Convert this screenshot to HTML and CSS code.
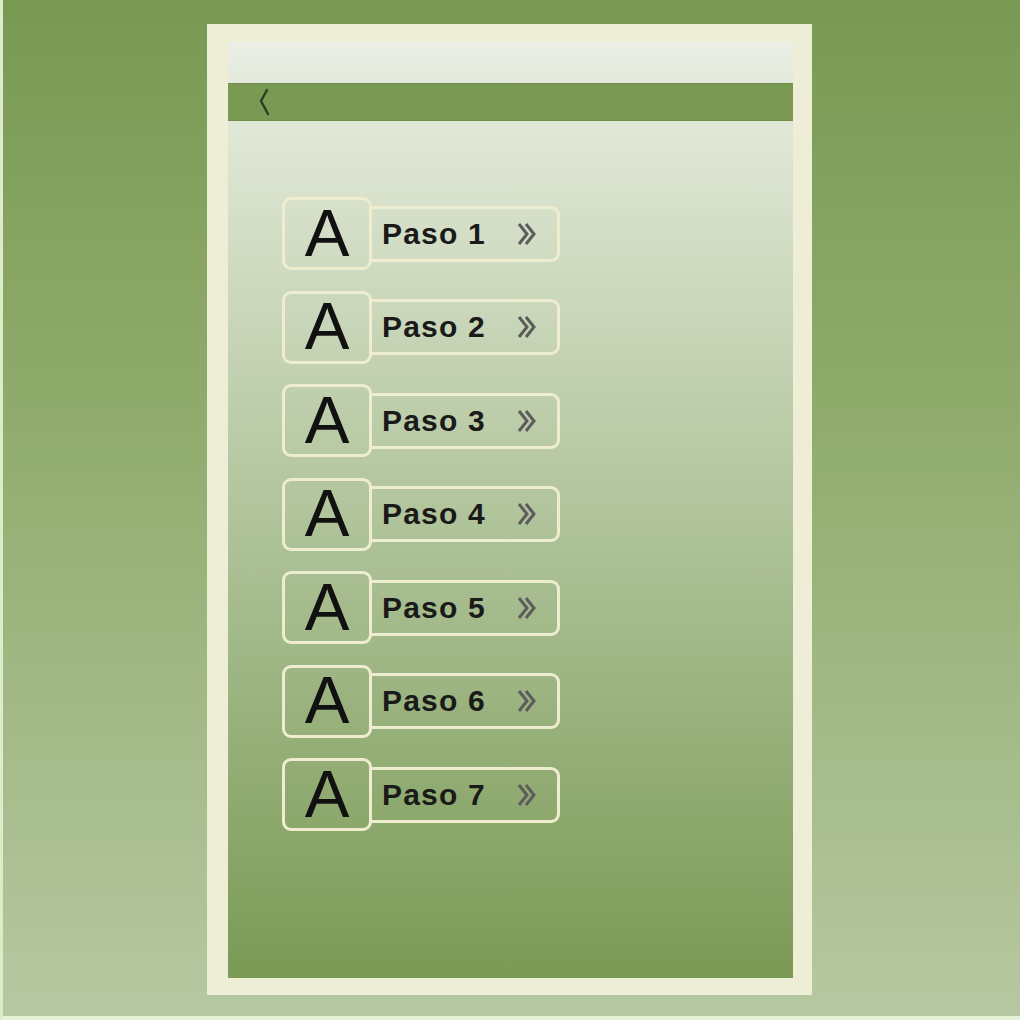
FILE: index.html
```html
<!DOCTYPE html>
<html lang="es">
<head>
<meta charset="utf-8">
<title>Pasos</title>
<link rel="stylesheet" href="styles.css">
</head>
<body>
<div class="page">
  <div class="frame">
    <div class="screen">
      <div class="status"></div>
      <div class="header">
        <svg class="back" width="16" height="30" viewBox="0 0 16 30"><path d="M11 3 L5 14 L12 27" fill="none" stroke="#2f3b24" stroke-width="2.4" stroke-linecap="round" stroke-linejoin="round"/></svg>
      </div>
      <div class="content">
        <ul class="steps">
          <li class="step"><span class="icon">A</span><span class="label">Paso 1<svg class="chev" width="22" height="26" viewBox="0 0 22 26"><path d="M3 3 L11 13 L3 23 M10 3 L18 13 L10 23" fill="none" stroke="#5c5c5c" stroke-width="3"/></svg></span></li>
          <li class="step"><span class="icon">A</span><span class="label">Paso 2<svg class="chev" width="22" height="26" viewBox="0 0 22 26"><path d="M3 3 L11 13 L3 23 M10 3 L18 13 L10 23" fill="none" stroke="#5c5c5c" stroke-width="3"/></svg></span></li>
          <li class="step"><span class="icon">A</span><span class="label">Paso 3<svg class="chev" width="22" height="26" viewBox="0 0 22 26"><path d="M3 3 L11 13 L3 23 M10 3 L18 13 L10 23" fill="none" stroke="#5c5c5c" stroke-width="3"/></svg></span></li>
          <li class="step"><span class="icon">A</span><span class="label">Paso 4<svg class="chev" width="22" height="26" viewBox="0 0 22 26"><path d="M3 3 L11 13 L3 23 M10 3 L18 13 L10 23" fill="none" stroke="#5c5c5c" stroke-width="3"/></svg></span></li>
          <li class="step"><span class="icon">A</span><span class="label">Paso 5<svg class="chev" width="22" height="26" viewBox="0 0 22 26"><path d="M3 3 L11 13 L3 23 M10 3 L18 13 L10 23" fill="none" stroke="#5c5c5c" stroke-width="3"/></svg></span></li>
          <li class="step"><span class="icon">A</span><span class="label">Paso 6<svg class="chev" width="22" height="26" viewBox="0 0 22 26"><path d="M3 3 L11 13 L3 23 M10 3 L18 13 L10 23" fill="none" stroke="#5c5c5c" stroke-width="3"/></svg></span></li>
          <li class="step"><span class="icon">A</span><span class="label">Paso 7<svg class="chev" width="22" height="26" viewBox="0 0 22 26"><path d="M3 3 L11 13 L3 23 M10 3 L18 13 L10 23" fill="none" stroke="#5c5c5c" stroke-width="3"/></svg></span></li>
        </ul>
      </div>
    </div>
  </div>
</div>
</body>
</html>
```

FILE: styles.css
```css
html, body {
  margin: 0;
  padding: 0;
}
body {
  width: 1020px;
  height: 1020px;
  overflow: hidden;
  font-family: "Liberation Sans", Arial, sans-serif;
}
.page {
  box-sizing: border-box;
  width: 1020px;
  height: 1020px;
  padding: 24px 0 0 204px;
  background: linear-gradient(180deg, #799953 0%, #8fab6c 40%, #b6c8a1 100%);
  border-left: 3px solid #dcecc8;
  border-bottom: 4px solid #e6f2d6;
}
.frame {
  box-sizing: border-box;
  width: 605px;
  height: 971px;
  padding: 18px 19px 17px 21px;
  background: #eeedd6;
}
.screen {
  display: flex;
  flex-direction: column;
  height: 100%;
}
.status {
  height: 41px;
  background: linear-gradient(180deg, #ebefe7, #e3e9db);
}
.header {
  box-sizing: border-box;
  height: 38px;
  background: #7a9a54;
  border-top: 1px solid #6f8f49;
  border-bottom: 1px solid #6f8f49;
  display: flex;
  align-items: center;
  padding-left: 28px;
}
.back {
  display: block;
}
.content {
  flex: 1;
  background: linear-gradient(180deg, #e1e8d7 0%, #a6bc8e 56%, #7a9a55 100%);
  padding: 76px 0 0 54px;
}
.steps {
  list-style: none;
  margin: 0;
  padding: 0;
  display: flex;
  flex-direction: column;
  gap: 20.5px;
}
.step {
  display: flex;
  align-items: center;
  height: 73px;
}
.icon {
  position: relative;
  z-index: 1;
  box-sizing: border-box;
  width: 90px;
  height: 73px;
  border: 3px solid #eeedd0;
  border-radius: 9px;
  display: flex;
  align-items: center;
  justify-content: center;
  font-size: 67px;
  line-height: 1;
  color: #111;
  padding-bottom: 3px;
}
.label {
  box-sizing: border-box;
  margin-left: -2px;
  width: 190px;
  height: 56px;
  border: 3px solid #eeedd0;
  border-left: none;
  border-radius: 0 9px 9px 0;
  display: flex;
  align-items: center;
  padding-left: 12px;
  font-size: 30px;
  font-weight: bold;
  letter-spacing: 1.2px;
  color: #1a1a1a;
}
.chev {
  display: block;
  margin-left: auto;
  margin-right: 19px;
}
```
